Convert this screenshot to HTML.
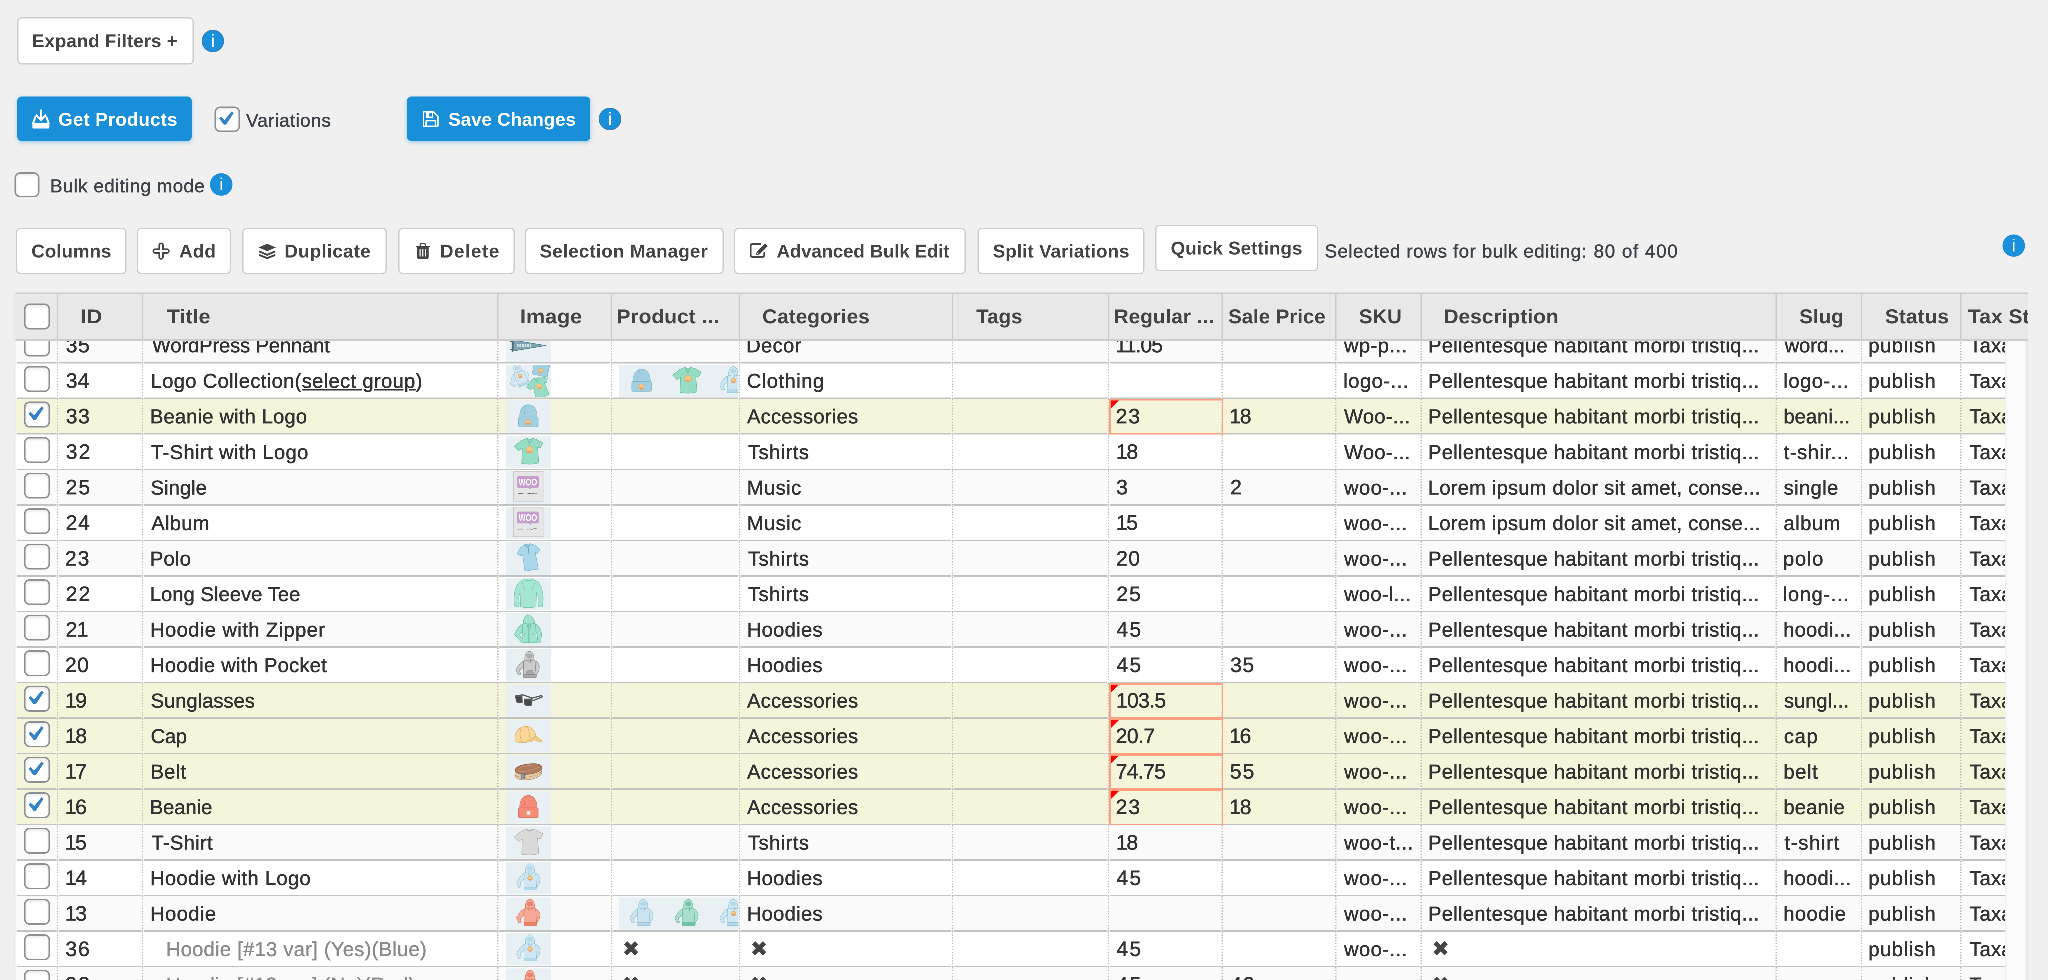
<!DOCTYPE html>
<html lang="en">
<head>
<meta charset="utf-8">
<title>Bulk Table Editor</title>
<style>
html,body{margin:0;padding:0;background:#f0f0f0;}
body{width:2048px;height:980px;overflow:hidden;position:relative;}
#app{will-change:transform;position:absolute;left:0;top:0;width:8192px;height:3920px;transform:scale(0.25);transform-origin:0 0;overflow:hidden;background:#f0f0f0;font-family:"Liberation Sans",sans-serif;font-size:74px;color:#3c434a;}
#app *{box-sizing:border-box;}
.btn{position:absolute;background:#fff;border:5.68px solid #ccc;border-radius:18px;color:#444;font-weight:700;font-size:74px;}
.pbtn{position:absolute;background:#198fda;border-radius:18px;color:#fff;font-weight:700;font-size:74px;box-shadow:0 5.6px 16.8px rgba(25,143,218,.38);}
.tx{position:absolute;white-space:pre;}
.btn svg,.pbtn svg{position:absolute;}
.info{position:absolute;width:89.6px;height:89.6px;border-radius:50%;background:#1a8fdc;color:#fff;text-align:center;font-size:70px;line-height:89.6px;font-weight:400;}
.info.b{box-shadow:inset 0 0 0 3.6px #3b7db5;}
.cb{position:absolute;background:#fff;border:6px solid #8c8f94;border-radius:22.4px;box-shadow:inset 0 5.6px 11.2px rgba(0,0,0,.1);}
.cb svg{position:absolute;left:0;top:0;width:100%;height:100%;}
.lbl{position:absolute;white-space:pre;font-size:74px;color:#3c434a;-webkit-text-stroke:1.4px #3c434a;}
#tbl{position:absolute;left:0;top:0;width:8192px;height:3920px;}
.row{position:absolute;background:#fff;font-size:79.6px;color:#333;overflow:hidden;-webkit-text-stroke:1.6px #333;}
.row.o{background:#fafafa;}
.row.s{background:#f5f5dc;}
.row .t{position:absolute;white-space:pre;}
.row .ln{position:absolute;left:6.8px;right:0;bottom:0;height:6px;background:#c2c2c2;}
.row .v{position:absolute;top:0;bottom:0;width:9px;background-color:inherit;background-image:repeating-linear-gradient(to bottom,#b9b9b9 0,#b9b9b9 5px,transparent 5px,transparent 11.36px);background-size:5px 100%;background-position:center top;background-repeat:no-repeat;}
.row .g{color:#8a8a8a;-webkit-text-stroke:1.4px #8a8a8a;}
.row .x{font-family:"DejaVu Sans",sans-serif;color:#444;-webkit-text-stroke:0;}
.row svg.th{position:absolute;}
.row .gal{position:absolute;top:0;bottom:0;overflow:hidden;}
.hl{position:absolute;border:6px solid #ff9f80;}
.hl i{position:absolute;left:0;top:0;width:0;height:0;border-top:32px solid #f00;border-right:32px solid transparent;}
#hdr{position:absolute;background:#e8e8e8;border-top:5.68px solid #ccc;border-bottom:6px solid #cdcdcd;font-size:79.6px;font-weight:700;color:#444;overflow:hidden;}
#hdr .h{position:absolute;top:0;bottom:0;width:5.2px;background:#ccc;}
#hdr .t{position:absolute;white-space:pre;transform-origin:0 50%;}
#track{position:absolute;background:#fbfbfb;border-left:5.6px solid #f1f1f1;border-right:9.6px solid #e9e9e9;}
</style>
</head>
<body>
<div id="app">
<div class="btn" style="left:69px;top:69px;width:706px;height:188.6px"><span class="tx" style="left:53.98px;top:42.08px;line-height:96px;letter-spacing:0.58px;">Expand Filters +</span></div>
<div class="info b" style="left:806.8px;top:119.2px">i</div>
<div class="pbtn" style="left:68.8px;top:386px;width:698.4px;height:177.6px"><svg style="left:59.2px;top:51.6px;width:71.2px;height:78px" viewBox="0 0 18 20"><path d="M9 .8v10M4.500 6l4.500 4.700L13.500 6" fill="none" stroke="#fff" stroke-width="2.100" stroke-linecap="round" stroke-linejoin="round"/><path d="M3.400 7.600L1 14M14.600 7.600L17 14" fill="none" stroke="#fff" stroke-width="2" stroke-linecap="round"/><path d="M.3 13.600h17.400v4.900a1 1 0 0 1-1 1H1.300a1 1 0 0 1-1-1z" fill="#fff"/></svg><span class="tx" style="left:164.24px;top:43.96px;line-height:96px;letter-spacing:1.07px;">Get Products</span></div>
<div class="cb" style="left:857.6px;top:425.6px;width:102px;height:102px"><svg viewBox="0 0 100 100"><polygon fill="#3582c4" points="14,47 21,38 38,53 70,15 79,22 45,74 35,74"/></svg></div>
<div class="lbl" style="left:984.29px;top:433.96px;line-height:96px;letter-spacing:1.72px;">Variations</div>
<div class="pbtn" style="left:1627.6px;top:386px;width:733.4px;height:177.6px"><svg style="left:63.6px;top:58px;width:63.6px;height:64px" viewBox="0 0 16 16"><path d="M1.400 .7h9.400l4.500 4.600v9.300a.7 .7 0 0 1-.7 .7H1.400a.7 .7 0 0 1-.7-.7V1.400a.7 .7 0 0 1 .7-.7z" fill="none" stroke="#fff" stroke-width="1.400" stroke-linejoin="round"/><path d="M3 1h7.600v5.200a.6 .6 0 0 1-.6 .6H3.600a.6 .6 0 0 1-.6-.6z" fill="#fff"/><rect x="6.600" y="2" width="2.800" height="3.600" rx=".5" fill="#198fda"/><path d="M3.300 15V10.300a.6 .6 0 0 1 .6-.6h8.200a.6 .6 0 0 1 .6 .6V15" fill="none" stroke="#fff" stroke-width="1.400"/></svg><span class="tx" style="left:165.86px;top:43.56px;line-height:96px;letter-spacing:0.37px;">Save Changes</span></div>
<div class="info b" style="left:2395.2px;top:431.2px">i</div>
<div class="cb" style="left:58.4px;top:688.8px;width:100px;height:100px"></div>
<div class="lbl" style="left:200.34px;top:695.56px;line-height:96px;letter-spacing:1.86px;">Bulk editing mode</div>
<div class="info" style="left:840.4px;top:693.2px">i</div>
<div class="btn" style="left:64px;top:910.8px;width:442.4px;height:185.2px"><span class="tx" style="left:56.53px;top:41.08px;line-height:96px;letter-spacing:0.52px;">Columns</span></div>
<div class="btn" style="left:546.8px;top:910.8px;width:376.8px;height:185.2px"><svg style="left:58.32px;top:54.32px;width:68.8px;height:68.8px" viewBox="0 0 17.200 17.200"><path d="M8.600 .9a1.800 1.800 0 0 1 1.800 1.800v4.100h4.100a1.800 1.800 0 0 1 0 3.600h-4.100v4.100a1.800 1.800 0 0 1-3.600 0v-4.100H2.700a1.800 1.800 0 0 1 0-3.600h4.100V2.700A1.800 1.800 0 0 1 8.600 .9z" fill="none" stroke="#444" stroke-width="1.700"/></svg><span class="tx" style="left:165.06px;top:41.08px;line-height:96px;letter-spacing:1.25px;">Add</span></div>
<div class="btn" style="left:968.8px;top:910.8px;width:578.4px;height:185.2px"><svg style="left:60.52px;top:59.12px;width:69.4px;height:60px" viewBox="0 0 17.400 15"><path d="M8.700 0L17.400 3.700 8.700 7.400 0 3.700z" fill="#444"/><path d="M.6 7.600L8.700 11.100 16.800 7.600M.6 11.200L8.700 14.400 16.800 11.200" fill="none" stroke="#444" stroke-width="1.900"/></svg><span class="tx" style="left:163.88px;top:41.08px;line-height:96px;letter-spacing:1.42px;">Duplicate</span></div>
<div class="btn" style="left:1592.8px;top:910.8px;width:466.4px;height:185.2px"><svg style="left:65.12px;top:55.92px;width:56.8px;height:64px" viewBox="0 0 14.200 16"><path d="M4.500 3V1.900a1.300 1.300 0 0 1 1.300-1.300h2.600a1.300 1.300 0 0 1 1.300 1.300V3" fill="none" stroke="#444" stroke-width="1.300"/><rect x="0" y="2.800" width="14.200" height="1.500" rx=".4" fill="#444"/><path d="M1.300 3.600h11.600v10.800a1.600 1.600 0 0 1-1.600 1.600H2.900a1.600 1.600 0 0 1-1.600-1.600z" fill="#444"/><path d="M4.300 6v7.500M7.100 6v7.500M9.900 6v7.500" stroke="#fff" stroke-width="1.100"/></svg><span class="tx" style="left:162.18px;top:41.08px;line-height:96px;letter-spacing:2.95px;">Delete</span></div>
<div class="btn" style="left:2100.4px;top:910.8px;width:794.6px;height:185.2px"><span class="tx" style="left:53.46px;top:41.08px;line-height:96px;letter-spacing:1.14px;">Selection Manager</span></div>
<div class="btn" style="left:2936px;top:910.8px;width:926.8px;height:185.2px"><svg style="left:57.52px;top:55.92px;width:73.6px;height:60px" viewBox="0 0 18.400 15"><path d="M10.500 .9H3a2.100 2.100 0 0 0-2.100 2.100v9a2.100 2.100 0 0 0 2.100 2.100h9.400a2.100 2.100 0 0 0 2.100-2.100V10" fill="none" stroke="#444" stroke-width="1.700" stroke-linecap="round"/><path d="M15.300 .4l2.700 2.700-8.300 8.300-3.600 .9 .9-3.600z" fill="#444"/><path d="M7.500 9.500l1.400 1.400-1.900 .5z" fill="#fff"/></svg><span class="tx" style="left:165.48px;top:41.08px;line-height:96px;letter-spacing:-0.2px;">Advanced Bulk Edit</span></div>
<div class="btn" style="left:3909.6px;top:910.8px;width:668.8px;height:185.2px"><span class="tx" style="left:56.73px;top:41.08px;line-height:96px;letter-spacing:0.77px;">Split Variations</span></div>
<div class="btn" style="left:4621.2px;top:899.2px;width:651.6px;height:185.8px"><span class="tx" style="left:56.81px;top:40.68px;line-height:96px;letter-spacing:0.63px;">Quick Settings</span></div>
<div class="lbl" style="left:5299.07px;top:956.76px;line-height:96px;letter-spacing:2.01px;">Selected rows for bulk editing:</div>
<div class="lbl" style="left:6374.67px;top:956.76px;line-height:96px;letter-spacing:3.4px;">80 of 400</div>
<div class="info" style="left:8010px;top:937.6px">i</div>
<div id="tbl">
<div class="row o" style="left:62.4px;top:1312.36px;width:7958.8px;height:142.04px"><i class="ln"></i><i class="v" style="left:163.12px"></i><i class="v" style="left:504.02px"></i><i class="v" style="left:1924.42px"></i><i class="v" style="left:2378.94px"></i><i class="v" style="left:2890.29px"></i><i class="v" style="left:3742.53px"></i><i class="v" style="left:4367.5px"></i><i class="v" style="left:4822.03px"></i><i class="v" style="left:5276.56px"></i><i class="v" style="left:5617.46px"></i><i class="v" style="left:7037.86px"></i><i class="v" style="left:7378.75px"></i><i class="v" style="left:7776.46px"></i><span class="cb" style="left:33.4px;top:10px;width:103.8px;height:103.8px"></span><span class="t" style="left:201.07px;top:12.95px;line-height:112px;letter-spacing:2.88px;font-size:82.8px;">35</span><span class="t" style="left:545.68px;top:14.06px;line-height:112px;letter-spacing:0.01px;">WordPress Pennant</span><svg class="th" style="left:1960.8px;top:4.8px;width:180.8px;height:130px" viewBox="0 0 45 32.500" preserveAspectRatio="none"><rect width="45" height="32.500" fill="#e8f0f4"/><path d="M6.500 9.500v13" stroke="#4d6f7c" stroke-width="1.200"/><path d="M7.600 10.800L40 16.300 7.600 21.700z" fill="#7fa5b2" stroke="#4d6f7c" stroke-width=".5"/><path d="M4 12.500h3.500M4 20.200h3.500" stroke="#4d6f7c" stroke-width="1"/><path d="M11 16.300h14" stroke="#d6e8ee" stroke-width="2.600" stroke-dasharray="1.700 .9"/></svg><span class="t" style="left:2922.45px;top:14.06px;line-height:112px;letter-spacing:2.05px;">Decor</span><span class="t" style="left:4399.19px;top:12.95px;line-height:112px;letter-spacing:-2.8px;font-size:82.8px;">11.05</span><span class="t" style="left:5313.85px;top:14.06px;line-height:112px;letter-spacing:2.27px;">wp-p...</span><span class="t" style="left:5650.15px;top:14.06px;line-height:112px;letter-spacing:1.59px;">Pellentesque habitant morbi tristiq...</span><span class="t" style="left:7076.55px;top:14.06px;line-height:112px;letter-spacing:0.2px;">word...</span><span class="t" style="left:7411px;top:14.06px;line-height:112px;letter-spacing:2.82px;">publish</span><span class="t" style="left:7815.35px;top:14.06px;line-height:112px;letter-spacing:1.2px;">Taxable</span></div>
<div class="row" style="left:62.4px;top:1454.4px;width:7958.8px;height:142.04px"><i class="ln"></i><i class="v" style="left:163.12px"></i><i class="v" style="left:504.02px"></i><i class="v" style="left:1924.42px"></i><i class="v" style="left:2378.94px"></i><i class="v" style="left:2890.29px"></i><i class="v" style="left:3742.53px"></i><i class="v" style="left:4367.5px"></i><i class="v" style="left:4822.03px"></i><i class="v" style="left:5276.56px"></i><i class="v" style="left:5617.46px"></i><i class="v" style="left:7037.86px"></i><i class="v" style="left:7378.75px"></i><i class="v" style="left:7776.46px"></i><span class="cb" style="left:33.4px;top:10px;width:103.8px;height:103.8px"></span><span class="t" style="left:201.17px;top:12.95px;line-height:112px;letter-spacing:1.28px;font-size:82.8px;">34</span><span class="t" style="left:540.52px;top:14.06px;line-height:112px;letter-spacing:1.82px;">Logo Collection(<u>select group</u>)</span><svg class="th" style="left:1960.8px;top:4.8px;width:180.8px;height:130px" viewBox="0 0 45 32.500" preserveAspectRatio="none"><rect width="45" height="32.500" fill="#e8f0f4"/><g transform="translate(-9.900,-4) rotate(-20 22.400 14.900) translate(22.400,14.900) scale(.86) translate(-22.400,-14.900)"><path d="M18.600 11.200c-2.400 .9-4.200 3-5.600 5.600l-2.300 3.400 2.300 5.400 2.500-.9-1.100-3.600 3.400-3.400z" fill="#d3e8f2" stroke="#9cc3d4" stroke-width=".45"/><path d="M29.600 11.200c2.600 1.100 4 3.200 4.500 5.800l-.6 4.200-2.300 4-2.400-.9 1.400-3.800-1.200-3.600z" fill="#d3e8f2" stroke="#9cc3d4" stroke-width=".45"/><path d="M18.400 11.300c1.600-1.100 3.600-1.500 5.800-1.500s4.200 .4 5.600 1.500l.9 14h-12.600z" fill="#d3e8f2" stroke="#9cc3d4" stroke-width=".45"/><rect x="18.100" y="25.100" width="13" height="2.900" rx=".7" fill="#b6d9e8" stroke="#9cc3d4" stroke-width=".4"/><path d="M19.600 10.400c-.5-4.600 1.400-8.400 4.500-8.700 3.200 .3 5 4.100 4.400 8.700-2.700 1.200-6.200 1.200-8.900 0z" fill="#d3e8f2" stroke="#9cc3d4" stroke-width=".45"/><ellipse cx="24.100" cy="6.400" rx="2.900" ry="2.300" fill="#b6d9e8"/><path d="M22.900 9.200v4.600M25.300 9.200v4.200" stroke="#9cc3d4" stroke-width=".45" fill="none"/><circle cx="24.2" cy="16" r="2.5" fill="#f3c885" stroke="#d9a566" stroke-width=".35"/><path d="M22.20 16.75a2.12 2.12 0 0 0 4.00 0z" fill="#e89b6d"/></g><g transform="rotate(12 35 6)"><rect x="27" y="-1" width="15.500" height="12" fill="#a3cfe3" stroke="#86b7cd" stroke-width=".5"/><circle cx="34.5" cy="6.2" r="2.4" fill="#f3c885" stroke="#d9a566" stroke-width=".35"/><path d="M32.58 6.92a2.04 2.04 0 0 0 3.84 0z" fill="#e89b6d"/></g><g transform="translate(10,7.600) rotate(-18 22.600 15.700) translate(22.600,15.700) scale(.8) translate(-22.600,-15.700)"><path d="M15.900 4.600l5.200-2.200c1.300 1.500 3.700 1.600 5.400 .1l4.800 1.500 5.700 3.300-2.700 5.200-2.700-1.300 1.300 15.900c-5 1.600-11.500 1.700-17 .6l.6-15.400-3.600 2.600-4.400-4.600z" fill="#97dcc4" stroke="#67b99c" stroke-width=".5" stroke-linejoin="round"/><path d="M21.100 2.400l2.600 5.800 2.800-5.700" fill="none" stroke="#67b99c" stroke-width=".7"/><circle cx="23.9" cy="14" r="3.5" fill="#f3c885" stroke="#d9a566" stroke-width=".35"/><path d="M21.10 15.05a2.98 2.98 0 0 0 5.60 0z" fill="#e89b6d"/></g></svg><span class="gal" style="left:2413.6px;width:478px"><svg class="th" style="left:0px;top:4.8px;width:180.8px;height:130px" viewBox="0 0 45 32.500" preserveAspectRatio="none"><rect width="45" height="32.500" fill="#e8f0f4"/><path d="M13.800 17.200c-.2-8 3.400-12.800 8.700-12.800s8.900 4.800 8.700 12.800z" fill="#a3cfe3" stroke="#7fb2c9" stroke-width=".45"/><path d="M19.800 5.300c-.9 3-1.100 6-1 9" stroke="#7fb2c9" stroke-width=".45" fill="none"/><rect x="12.700" y="16.800" width="19.600" height="9.800" rx="1.300" fill="#a3cfe3" stroke="#7fb2c9" stroke-width=".5"/><circle cx="22.2" cy="22" r="2.8" fill="#f3c885" stroke="#d9a566" stroke-width=".35"/><path d="M19.96 22.84a2.38 2.38 0 0 0 4.48 0z" fill="#e89b6d"/></svg><svg class="th" style="left:180px;top:4.8px;width:180.8px;height:130px" viewBox="0 0 45 32.500" preserveAspectRatio="none"><rect width="45" height="32.500" fill="#e8f0f4"/><path d="M15.900 4.600l5.200-2.200c1.300 1.500 3.700 1.600 5.400 .1l4.800 1.500 5.700 3.300-2.700 5.200-2.700-1.300 1.300 15.900c-5 1.600-11.500 1.700-17 .6l.6-15.400-3.600 2.600-4.400-4.600z" fill="#97dcc4" stroke="#67b99c" stroke-width=".5" stroke-linejoin="round"/><path d="M21.100 2.400l2.600 5.800 2.800-5.700" fill="none" stroke="#67b99c" stroke-width=".7"/><circle cx="23.9" cy="14" r="3.5" fill="#f3c885" stroke="#d9a566" stroke-width=".35"/><path d="M21.10 15.05a2.98 2.98 0 0 0 5.60 0z" fill="#e89b6d"/></svg><svg class="th" style="left:360px;top:4.8px;width:180.8px;height:130px" viewBox="0 0 45 32.500" preserveAspectRatio="none"><rect width="45" height="32.500" fill="#e8f0f4"/><path d="M18.600 11.200c-2.400 .9-4.200 3-5.600 5.600l-2.300 3.400 2.300 5.400 2.500-.9-1.100-3.600 3.400-3.400z" fill="#cfe7f2" stroke="#8cbdd0" stroke-width=".45"/><path d="M29.600 11.200c2.600 1.100 4 3.200 4.500 5.800l-.6 4.200-2.300 4-2.400-.9 1.400-3.800-1.200-3.600z" fill="#cfe7f2" stroke="#8cbdd0" stroke-width=".45"/><path d="M18.400 11.300c1.600-1.100 3.600-1.500 5.800-1.500s4.200 .4 5.600 1.500l.9 14h-12.600z" fill="#cfe7f2" stroke="#8cbdd0" stroke-width=".45"/><rect x="18.100" y="25.100" width="13" height="2.900" rx=".7" fill="#b0d9e9" stroke="#8cbdd0" stroke-width=".4"/><path d="M19.600 10.400c-.5-4.600 1.400-8.400 4.500-8.700 3.200 .3 5 4.100 4.400 8.700-2.700 1.200-6.200 1.200-8.900 0z" fill="#cfe7f2" stroke="#8cbdd0" stroke-width=".45"/><ellipse cx="24.100" cy="6.400" rx="2.900" ry="2.300" fill="#b0d9e9"/><path d="M22.900 9.200v4.600M25.300 9.200v4.200" stroke="#8cbdd0" stroke-width=".45" fill="none"/><circle cx="24.2" cy="16" r="2.5" fill="#f3c885" stroke="#d9a566" stroke-width=".35"/><path d="M22.20 16.75a2.12 2.12 0 0 0 4.00 0z" fill="#e89b6d"/></svg></span><span class="t" style="left:2924.97px;top:14.06px;line-height:112px;letter-spacing:2.39px;">Clothing</span><span class="t" style="left:5310.81px;top:14.06px;line-height:112px;letter-spacing:2.44px;">logo-...</span><span class="t" style="left:5650.15px;top:14.06px;line-height:112px;letter-spacing:1.59px;">Pellentesque habitant morbi tristiq...</span><span class="t" style="left:7071.21px;top:14.06px;line-height:112px;letter-spacing:2.44px;">logo-...</span><span class="t" style="left:7411px;top:14.06px;line-height:112px;letter-spacing:2.82px;">publish</span><span class="t" style="left:7815.35px;top:14.06px;line-height:112px;letter-spacing:1.2px;">Taxable</span></div>
<div class="row s" style="left:62.4px;top:1596.44px;width:7958.8px;height:142.04px"><i class="ln"></i><i class="v" style="left:163.12px"></i><i class="v" style="left:504.02px"></i><i class="v" style="left:1924.42px"></i><i class="v" style="left:2378.94px"></i><i class="v" style="left:2890.29px"></i><i class="v" style="left:3742.53px"></i><i class="v" style="left:4367.5px"></i><i class="v" style="left:4822.03px"></i><i class="v" style="left:5276.56px"></i><i class="v" style="left:5617.46px"></i><i class="v" style="left:7037.86px"></i><i class="v" style="left:7378.75px"></i><i class="v" style="left:7776.46px"></i><span class="cb" style="left:33.4px;top:10px;width:103.8px;height:103.8px"><svg viewBox="0 0 100 100"><polygon fill="#3582c4" points="14,47 21,38 38,53 70,15 79,22 45,74 35,74"/></svg></span><span class="t" style="left:201px;top:12.95px;line-height:112px;letter-spacing:3.27px;font-size:82.8px;">33</span><span class="t" style="left:537.66px;top:14.06px;line-height:112px;letter-spacing:1.14px;">Beanie with Logo</span><svg class="th" style="left:1960.8px;top:4.8px;width:180.8px;height:130px" viewBox="0 0 45 32.500" preserveAspectRatio="none"><rect width="45" height="32.500" fill="#e8f0f4"/><path d="M13.800 17.200c-.2-8 3.400-12.800 8.700-12.800s8.900 4.800 8.700 12.800z" fill="#a3cfe3" stroke="#7fb2c9" stroke-width=".45"/><path d="M19.800 5.300c-.9 3-1.100 6-1 9" stroke="#7fb2c9" stroke-width=".45" fill="none"/><rect x="12.700" y="16.800" width="19.600" height="9.800" rx="1.300" fill="#a3cfe3" stroke="#7fb2c9" stroke-width=".5"/><circle cx="22.2" cy="22" r="2.8" fill="#f3c885" stroke="#d9a566" stroke-width=".35"/><path d="M19.96 22.84a2.38 2.38 0 0 0 4.48 0z" fill="#e89b6d"/></svg><span class="t" style="left:2926.01px;top:14.06px;line-height:112px;letter-spacing:1.48px;">Accessories</span><span class="t" style="left:4400.73px;top:12.95px;line-height:112px;letter-spacing:4.64px;font-size:82.8px;">23</span><span class="t" style="left:4855.13px;top:12.95px;line-height:112px;letter-spacing:-4.14px;font-size:82.8px;">18</span><span class="t" style="left:5314.1px;top:14.06px;line-height:112px;letter-spacing:1.52px;">Woo-...</span><span class="t" style="left:5650.15px;top:14.06px;line-height:112px;letter-spacing:1.59px;">Pellentesque habitant morbi tristiq...</span><span class="t" style="left:7071.5px;top:14.06px;line-height:112px;letter-spacing:0.7px;">beani...</span><span class="t" style="left:7411px;top:14.06px;line-height:112px;letter-spacing:2.82px;">publish</span><span class="t" style="left:7815.35px;top:14.06px;line-height:112px;letter-spacing:1.2px;">Taxable</span></div>
<div class="row" style="left:62.4px;top:1738.48px;width:7958.8px;height:142.04px"><i class="ln"></i><i class="v" style="left:163.12px"></i><i class="v" style="left:504.02px"></i><i class="v" style="left:1924.42px"></i><i class="v" style="left:2378.94px"></i><i class="v" style="left:2890.29px"></i><i class="v" style="left:3742.53px"></i><i class="v" style="left:4367.5px"></i><i class="v" style="left:4822.03px"></i><i class="v" style="left:5276.56px"></i><i class="v" style="left:5617.46px"></i><i class="v" style="left:7037.86px"></i><i class="v" style="left:7378.75px"></i><i class="v" style="left:7776.46px"></i><span class="cb" style="left:33.4px;top:10px;width:103.8px;height:103.8px"></span><span class="t" style="left:201.17px;top:12.95px;line-height:112px;letter-spacing:5.3px;font-size:82.8px;">32</span><span class="t" style="left:541.96px;top:14.06px;line-height:112px;letter-spacing:1.97px;">T-Shirt with Logo</span><svg class="th" style="left:1960.8px;top:4.8px;width:180.8px;height:130px" viewBox="0 0 45 32.500" preserveAspectRatio="none"><rect width="45" height="32.500" fill="#e8f0f4"/><path d="M15.900 4.600l5.200-2.200c1.300 1.500 3.700 1.600 5.400 .1l4.800 1.500 5.700 3.300-2.700 5.200-2.700-1.300 1.300 15.900c-5 1.600-11.500 1.700-17 .6l.6-15.400-3.600 2.600-4.400-4.600z" fill="#97dcc4" stroke="#67b99c" stroke-width=".5" stroke-linejoin="round"/><path d="M21.100 2.400l2.600 5.800 2.800-5.700" fill="none" stroke="#67b99c" stroke-width=".7"/><circle cx="23.9" cy="14" r="3.5" fill="#f3c885" stroke="#d9a566" stroke-width=".35"/><path d="M21.10 15.05a2.98 2.98 0 0 0 5.60 0z" fill="#e89b6d"/></svg><span class="t" style="left:2930px;top:14.06px;line-height:112px;letter-spacing:2.2px;">Tshirts</span><span class="t" style="left:4401.93px;top:12.95px;line-height:112px;letter-spacing:-4.14px;font-size:82.8px;">18</span><span class="t" style="left:5314.1px;top:14.06px;line-height:112px;letter-spacing:1.52px;">Woo-...</span><span class="t" style="left:5650.15px;top:14.06px;line-height:112px;letter-spacing:1.59px;">Pellentesque habitant morbi tristiq...</span><span class="t" style="left:7072.62px;top:14.06px;line-height:112px;letter-spacing:2.59px;">t-shir...</span><span class="t" style="left:7411px;top:14.06px;line-height:112px;letter-spacing:2.82px;">publish</span><span class="t" style="left:7815.35px;top:14.06px;line-height:112px;letter-spacing:1.2px;">Taxable</span></div>
<div class="row o" style="left:62.4px;top:1880.52px;width:7958.8px;height:142.04px"><i class="ln"></i><i class="v" style="left:163.12px"></i><i class="v" style="left:504.02px"></i><i class="v" style="left:1924.42px"></i><i class="v" style="left:2378.94px"></i><i class="v" style="left:2890.29px"></i><i class="v" style="left:3742.53px"></i><i class="v" style="left:4367.5px"></i><i class="v" style="left:4822.03px"></i><i class="v" style="left:5276.56px"></i><i class="v" style="left:5617.46px"></i><i class="v" style="left:7037.86px"></i><i class="v" style="left:7378.75px"></i><i class="v" style="left:7776.46px"></i><span class="cb" style="left:33.4px;top:10px;width:103.8px;height:103.8px"></span><span class="t" style="left:200.46px;top:12.95px;line-height:112px;letter-spacing:5.18px;font-size:82.8px;">25</span><span class="t" style="left:540.4px;top:14.06px;line-height:112px;letter-spacing:0.63px;">Single</span><svg class="th" style="left:1960.8px;top:4.8px;width:180.8px;height:130px" viewBox="0 0 45 32.500" preserveAspectRatio="none"><rect width="45" height="32.500" fill="#e8f0f4"/><rect x="7.600" y=".4" width="29.600" height="29.600" fill="#e6e6e6" stroke="#c4c4c4" stroke-width=".6"/><path d="M13 4.800h18a2 2 0 0 1 2 2v7.800a2 2 0 0 1-2 2h-5.300l-1.400 1.700-1.500-1.700H13a2 2 0 0 1-2-2V6.800a2 2 0 0 1 2-2z" fill="#c69fd0"/><text x="22" y="14.300" font-family="Liberation Sans, sans-serif" font-weight="700" font-size="9.800" fill="#fff" text-anchor="middle" textLength="18.500" lengthAdjust="spacingAndGlyphs">WOO</text><path d="M12.300 22.600l2-.5 1.200 .4 2-.3M21.600 22.500l2.500-.4 1.400 .5 3-.7 2.500 .2" stroke="#666" stroke-width=".6" fill="none"/></svg><span class="t" style="left:2925.32px;top:14.06px;line-height:112px;letter-spacing:2.24px;">Music</span><span class="t" style="left:4402.59px;top:12.95px;line-height:112px;font-size:82.8px;">3</span><span class="t" style="left:4858.62px;top:12.95px;line-height:112px;font-size:82.8px;">2</span><span class="t" style="left:5314.15px;top:14.06px;line-height:112px;letter-spacing:2.22px;">woo-...</span><span class="t" style="left:5649.67px;top:14.06px;line-height:112px;letter-spacing:1.32px;">Lorem ipsum dolor sit amet, conse...</span><span class="t" style="left:7072.46px;top:14.06px;line-height:112px;letter-spacing:2.01px;">single</span><span class="t" style="left:7411px;top:14.06px;line-height:112px;letter-spacing:2.82px;">publish</span><span class="t" style="left:7815.35px;top:14.06px;line-height:112px;letter-spacing:1.2px;">Taxable</span></div>
<div class="row" style="left:62.4px;top:2022.56px;width:7958.8px;height:142.04px"><i class="ln"></i><i class="v" style="left:163.12px"></i><i class="v" style="left:504.02px"></i><i class="v" style="left:1924.42px"></i><i class="v" style="left:2378.94px"></i><i class="v" style="left:2890.29px"></i><i class="v" style="left:3742.53px"></i><i class="v" style="left:4367.5px"></i><i class="v" style="left:4822.03px"></i><i class="v" style="left:5276.56px"></i><i class="v" style="left:5617.46px"></i><i class="v" style="left:7037.86px"></i><i class="v" style="left:7378.75px"></i><i class="v" style="left:7776.46px"></i><span class="cb" style="left:33.4px;top:10px;width:103.8px;height:103.8px"></span><span class="t" style="left:200.5px;top:12.95px;line-height:112px;letter-spacing:4.11px;font-size:82.8px;">24</span><span class="t" style="left:543.23px;top:14.06px;line-height:112px;letter-spacing:1.59px;">Album</span><svg class="th" style="left:1960.8px;top:4.8px;width:180.8px;height:130px" viewBox="0 0 45 32.500" preserveAspectRatio="none"><rect width="45" height="32.500" fill="#e8f0f4"/><rect x="7.600" y=".4" width="29.600" height="29.600" fill="#e6e6e6" stroke="#c4c4c4" stroke-width=".6"/><path d="M13 4.800h18a2 2 0 0 1 2 2v7.800a2 2 0 0 1-2 2h-5.300l-1.400 1.700-1.500-1.700H13a2 2 0 0 1-2-2V6.800a2 2 0 0 1 2-2z" fill="#c69fd0"/><text x="22" y="14.300" font-family="Liberation Sans, sans-serif" font-weight="700" font-size="9.800" fill="#fff" text-anchor="middle" textLength="18.500" lengthAdjust="spacingAndGlyphs">WOO</text><path d="M12.300 22.600l2-.5 1.200 .4 2-.3M21.600 22.500l2.500-.4 1.400 .5 3-.7 2.500 .2" stroke="#666" stroke-width=".6" fill="none"/></svg><span class="t" style="left:2925.32px;top:14.06px;line-height:112px;letter-spacing:2.24px;">Music</span><span class="t" style="left:4401.56px;top:12.95px;line-height:112px;letter-spacing:-4.8px;font-size:82.8px;">15</span><span class="t" style="left:5314.15px;top:14.06px;line-height:112px;letter-spacing:2.22px;">woo-...</span><span class="t" style="left:5649.67px;top:14.06px;line-height:112px;letter-spacing:1.32px;">Lorem ipsum dolor sit amet, conse...</span><span class="t" style="left:7071.75px;top:14.06px;line-height:112px;letter-spacing:2.5px;">album</span><span class="t" style="left:7411px;top:14.06px;line-height:112px;letter-spacing:2.82px;">publish</span><span class="t" style="left:7815.35px;top:14.06px;line-height:112px;letter-spacing:1.2px;">Taxable</span></div>
<div class="row o" style="left:62.4px;top:2164.6px;width:7958.8px;height:142.04px"><i class="ln"></i><i class="v" style="left:163.12px"></i><i class="v" style="left:504.02px"></i><i class="v" style="left:1924.42px"></i><i class="v" style="left:2378.94px"></i><i class="v" style="left:2890.29px"></i><i class="v" style="left:3742.53px"></i><i class="v" style="left:4367.5px"></i><i class="v" style="left:4822.03px"></i><i class="v" style="left:5276.56px"></i><i class="v" style="left:5617.46px"></i><i class="v" style="left:7037.86px"></i><i class="v" style="left:7378.75px"></i><i class="v" style="left:7776.46px"></i><span class="cb" style="left:33.4px;top:10px;width:103.8px;height:103.8px"></span><span class="t" style="left:197.93px;top:12.95px;line-height:112px;letter-spacing:4.64px;font-size:82.8px;">23</span><span class="t" style="left:537.35px;top:14.06px;line-height:112px;letter-spacing:1.37px;">Polo</span><svg class="th" style="left:1960.8px;top:4.8px;width:180.8px;height:130px" viewBox="0 0 45 32.500" preserveAspectRatio="none"><rect width="45" height="32.500" fill="#e8f0f4"/><g transform="rotate(-9 22 15)"><path d="M16.200 4.400l4.600-2.400h5.800l4.500 2.400 4.200 5.400-3.600 3.100-1.700-1.900 .5 17.300h-13.600l.4-17.300-1.600 1.900-3.700-3.100z" fill="#aad7e9" stroke="#7fb4c9" stroke-width=".5" stroke-linejoin="round"/><path d="M20.800 2l2.900 3.300 2.900-3.300M23.700 5.300v6.500" stroke="#6da3b9" stroke-width=".9" fill="none"/></g></svg><span class="t" style="left:2930px;top:14.06px;line-height:112px;letter-spacing:2.2px;">Tshirts</span><span class="t" style="left:4402.6px;top:12.95px;line-height:112px;letter-spacing:2.44px;font-size:82.8px;">20</span><span class="t" style="left:5314.15px;top:14.06px;line-height:112px;letter-spacing:2.22px;">woo-...</span><span class="t" style="left:5650.15px;top:14.06px;line-height:112px;letter-spacing:1.59px;">Pellentesque habitant morbi tristiq...</span><span class="t" style="left:7069.98px;top:14.06px;line-height:112px;letter-spacing:3.4px;">polo</span><span class="t" style="left:7411px;top:14.06px;line-height:112px;letter-spacing:2.82px;">publish</span><span class="t" style="left:7815.35px;top:14.06px;line-height:112px;letter-spacing:1.2px;">Taxable</span></div>
<div class="row" style="left:62.4px;top:2306.64px;width:7958.8px;height:142.04px"><i class="ln"></i><i class="v" style="left:163.12px"></i><i class="v" style="left:504.02px"></i><i class="v" style="left:1924.42px"></i><i class="v" style="left:2378.94px"></i><i class="v" style="left:2890.29px"></i><i class="v" style="left:3742.53px"></i><i class="v" style="left:4367.5px"></i><i class="v" style="left:4822.03px"></i><i class="v" style="left:5276.56px"></i><i class="v" style="left:5617.46px"></i><i class="v" style="left:7037.86px"></i><i class="v" style="left:7378.75px"></i><i class="v" style="left:7776.46px"></i><span class="cb" style="left:33.4px;top:10px;width:103.8px;height:103.8px"></span><span class="t" style="left:200.5px;top:12.95px;line-height:112px;letter-spacing:5.51px;font-size:82.8px;">22</span><span class="t" style="left:537.26px;top:14.06px;line-height:112px;letter-spacing:0.7px;">Long Sleeve Tee</span><svg class="th" style="left:1960.8px;top:4.8px;width:180.8px;height:130px" viewBox="0 0 45 32.500" preserveAspectRatio="none"><rect width="45" height="32.500" fill="#e8f0f4"/><path d="M14.500 3.500c2.400-1.600 5.300-2.400 8.300-2.400s5.900 .8 8.300 2.400c3.800 2.700 6 9.300 6.200 17.500l-.8 7.800-3.600 .6-.9-3.400 .3-7-1.700-4.200-.5 14.300c-4.700 1-10.600 1-15.300 0l-.5-14.300-1.400 4.200 .6 7-1 3.400-3.400-.6c-.7-2.600-1-5.200-.9-7.800 .2-8.200 2.500-14.800 6.300-17.500z" fill="#a5e6d2" stroke="#74c2a9" stroke-width=".5" stroke-linejoin="round"/><path d="M19 1.800c2.300 1.500 5.300 1.500 7.600 0M16.200 4.200l3.300 9M29.300 4.200l-3.300 9" stroke="#74c2a9" stroke-width=".5" fill="none"/></svg><span class="t" style="left:2930px;top:14.06px;line-height:112px;letter-spacing:2.2px;">Tshirts</span><span class="t" style="left:4403.26px;top:12.95px;line-height:112px;letter-spacing:5.18px;font-size:82.8px;">25</span><span class="t" style="left:5314.46px;top:14.06px;line-height:112px;letter-spacing:1.54px;">woo-l...</span><span class="t" style="left:5650.15px;top:14.06px;line-height:112px;letter-spacing:1.59px;">Pellentesque habitant morbi tristiq...</span><span class="t" style="left:7069.17px;top:14.06px;line-height:112px;letter-spacing:2.88px;">long-...</span><span class="t" style="left:7411px;top:14.06px;line-height:112px;letter-spacing:2.82px;">publish</span><span class="t" style="left:7815.35px;top:14.06px;line-height:112px;letter-spacing:1.2px;">Taxable</span></div>
<div class="row o" style="left:62.4px;top:2448.68px;width:7958.8px;height:142.04px"><i class="ln"></i><i class="v" style="left:163.12px"></i><i class="v" style="left:504.02px"></i><i class="v" style="left:1924.42px"></i><i class="v" style="left:2378.94px"></i><i class="v" style="left:2890.29px"></i><i class="v" style="left:3742.53px"></i><i class="v" style="left:4367.5px"></i><i class="v" style="left:4822.03px"></i><i class="v" style="left:5276.56px"></i><i class="v" style="left:5617.46px"></i><i class="v" style="left:7037.86px"></i><i class="v" style="left:7378.75px"></i><i class="v" style="left:7776.46px"></i><span class="cb" style="left:33.4px;top:10px;width:103.8px;height:103.8px"></span><span class="t" style="left:200.48px;top:12.95px;line-height:112px;letter-spacing:-1.51px;font-size:82.8px;">21</span><span class="t" style="left:538.43px;top:14.06px;line-height:112px;letter-spacing:2.09px;">Hoodie with Zipper</span><svg class="th" style="left:1960.8px;top:4.8px;width:180.8px;height:130px" viewBox="0 0 45 32.500" preserveAspectRatio="none"><rect width="45" height="32.500" fill="#e8f0f4"/><path d="M17.200 10.600c-3.300 1.400-5.900 4.800-8.500 10.400l6.300 7.300 2-1.400-3.300-5.500 3.600-3.400z" fill="#9fe3cf" stroke="#62b59c" stroke-width=".45"/><path d="M29.600 10.600c3.300 1.500 5.300 5 6.100 10.500l-1 7.800-2.800 .3-.6-7.400-1.500-3.800z" fill="#9fe3cf" stroke="#62b59c" stroke-width=".45"/><path d="M17 10.700c1.800-1 4-1.500 6.200-1.500s4.600 .5 6.500 1.500l.8 18.800h-14.500z" fill="#9fe3cf" stroke="#62b59c" stroke-width=".45"/><path d="M17.600 9.800c-.4-3.500 1.300-7 4.200-8.400 3.800 1.100 6.800 4.300 7.100 8.300-3.400 1.400-7.900 1.500-11.300 .1z" fill="#9fe3cf" stroke="#62b59c" stroke-width=".45"/><path d="M23.100 9.800v19.700" stroke="#4f9f88" stroke-width=".8"/><path d="M22 10.300l-.8 5.200M24.300 10.300l.8 5.200" stroke="#62b59c" stroke-width=".45"/><path d="M18.500 21.500l2.300-1.800h4.800l2.400 1.800" stroke="#62b59c" stroke-width=".45" fill="none"/></svg><span class="t" style="left:2925.31px;top:14.06px;line-height:112px;letter-spacing:1.7px;">Hoodies</span><span class="t" style="left:4403.53px;top:12.95px;line-height:112px;letter-spacing:6px;font-size:82.8px;">45</span><span class="t" style="left:5314.15px;top:14.06px;line-height:112px;letter-spacing:2.22px;">woo-...</span><span class="t" style="left:5650.15px;top:14.06px;line-height:112px;letter-spacing:1.59px;">Pellentesque habitant morbi tristiq...</span><span class="t" style="left:7070.74px;top:14.06px;line-height:112px;letter-spacing:1.45px;">hoodi...</span><span class="t" style="left:7411px;top:14.06px;line-height:112px;letter-spacing:2.82px;">publish</span><span class="t" style="left:7815.35px;top:14.06px;line-height:112px;letter-spacing:1.2px;">Taxable</span></div>
<div class="row" style="left:62.4px;top:2590.72px;width:7958.8px;height:142.04px"><i class="ln"></i><i class="v" style="left:163.12px"></i><i class="v" style="left:504.02px"></i><i class="v" style="left:1924.42px"></i><i class="v" style="left:2378.94px"></i><i class="v" style="left:2890.29px"></i><i class="v" style="left:3742.53px"></i><i class="v" style="left:4367.5px"></i><i class="v" style="left:4822.03px"></i><i class="v" style="left:5276.56px"></i><i class="v" style="left:5617.46px"></i><i class="v" style="left:7037.86px"></i><i class="v" style="left:7378.75px"></i><i class="v" style="left:7776.46px"></i><span class="cb" style="left:33.4px;top:10px;width:103.8px;height:103.8px"></span><span class="t" style="left:198.2px;top:12.95px;line-height:112px;letter-spacing:2.44px;font-size:82.8px;">20</span><span class="t" style="left:538.39px;top:14.06px;line-height:112px;letter-spacing:1.46px;">Hoodie with Pocket</span><svg class="th" style="left:1960.8px;top:4.8px;width:180.8px;height:130px" viewBox="0 0 45 32.500" preserveAspectRatio="none"><rect width="45" height="32.500" fill="#e8f0f4"/><g transform="translate(-.6,.5)"><path d="M18.600 11.200c-2.400 .9-4.200 3-5.600 5.600l-2.300 3.400 2.300 5.400 2.500-.9-1.100-3.600 3.400-3.400z" fill="#cbcbcb" stroke="#858585" stroke-width=".45"/><path d="M29.600 11.200c2.600 1.100 4 3.200 4.500 5.800l-.6 4.200-2.300 4-2.400-.9 1.400-3.800-1.200-3.600z" fill="#cbcbcb" stroke="#858585" stroke-width=".45"/><path d="M18.400 11.300c1.600-1.100 3.600-1.500 5.800-1.500s4.200 .4 5.600 1.500l.9 14h-12.600z" fill="#cbcbcb" stroke="#858585" stroke-width=".45"/><rect x="18.100" y="25.100" width="13" height="2.900" rx=".7" fill="#a9a9a9" stroke="#858585" stroke-width=".4"/><path d="M19.600 10.400c-.5-4.600 1.400-8.400 4.500-8.700 3.200 .3 5 4.100 4.400 8.700-2.700 1.200-6.200 1.200-8.900 0z" fill="#cbcbcb" stroke="#858585" stroke-width=".45"/><ellipse cx="24.100" cy="6.400" rx="2.900" ry="2.300" fill="#a9a9a9"/><path d="M22.900 9.200v4.600M25.300 9.200v4.200" stroke="#858585" stroke-width=".45" fill="none"/><path d="M20.400 25.100l1.600-4.400h5.200l1.600 4.400z" fill="#a9a9a9" stroke="#858585" stroke-width=".4"/></g></svg><span class="t" style="left:2925.31px;top:14.06px;line-height:112px;letter-spacing:1.7px;">Hoodies</span><span class="t" style="left:4403.53px;top:12.95px;line-height:112px;letter-spacing:6px;font-size:82.8px;">45</span><span class="t" style="left:4858.67px;top:12.95px;line-height:112px;letter-spacing:2.88px;font-size:82.8px;">35</span><span class="t" style="left:5314.15px;top:14.06px;line-height:112px;letter-spacing:2.22px;">woo-...</span><span class="t" style="left:5650.15px;top:14.06px;line-height:112px;letter-spacing:1.59px;">Pellentesque habitant morbi tristiq...</span><span class="t" style="left:7070.74px;top:14.06px;line-height:112px;letter-spacing:1.45px;">hoodi...</span><span class="t" style="left:7411px;top:14.06px;line-height:112px;letter-spacing:2.82px;">publish</span><span class="t" style="left:7815.35px;top:14.06px;line-height:112px;letter-spacing:1.2px;">Taxable</span></div>
<div class="row s" style="left:62.4px;top:2732.76px;width:7958.8px;height:142.04px"><i class="ln"></i><i class="v" style="left:163.12px"></i><i class="v" style="left:504.02px"></i><i class="v" style="left:1924.42px"></i><i class="v" style="left:2378.94px"></i><i class="v" style="left:2890.29px"></i><i class="v" style="left:3742.53px"></i><i class="v" style="left:4367.5px"></i><i class="v" style="left:4822.03px"></i><i class="v" style="left:5276.56px"></i><i class="v" style="left:5617.46px"></i><i class="v" style="left:7037.86px"></i><i class="v" style="left:7378.75px"></i><i class="v" style="left:7776.46px"></i><span class="cb" style="left:33.4px;top:10px;width:103.8px;height:103.8px"><svg viewBox="0 0 100 100"><polygon fill="#3582c4" points="14,47 21,38 38,53 70,15 79,22 45,74 35,74"/></svg></span><span class="t" style="left:197.82px;top:12.95px;line-height:112px;letter-spacing:-4.8px;font-size:82.8px;">19</span><span class="t" style="left:540.65px;top:14.06px;line-height:112px;letter-spacing:0.49px;">Sunglasses</span><svg class="th" style="left:1960.8px;top:4.8px;width:180.8px;height:130px" viewBox="0 0 45 32.500" preserveAspectRatio="none"><rect width="45" height="32.500" fill="#e8f0f4"/><path d="M9.300 11.600l7.600-1.300 9.500 3.300 9.300-2.600 .7 1.400-9.600 3.800" fill="none" stroke="#565656" stroke-width="1.200" stroke-linejoin="round"/><path d="M9.200 11.500l7.300-.8 .4 7.300c-2 1.300-5.400 1.100-6.600-.7z" fill="#5a5a5a"/><path d="M17.900 14.200l8.800-.2-.4 6.700c-2.300 1.600-6.200 1.400-7.800-.6z" fill="#5a5a5a"/><path d="M10.400 12.700l5-.5 .2 4.800c-1.500.7-3.600.6-4.500-.5z" fill="#454948"/><path d="M19.200 15.400l6.200-.1-.3 4.500c-1.700 1-4.200.9-5.400-.4z" fill="#454948"/></svg><span class="t" style="left:2926.01px;top:14.06px;line-height:112px;letter-spacing:1.48px;">Accessories</span><span class="t" style="left:4401.99px;top:12.95px;line-height:112px;letter-spacing:-1.85px;font-size:82.8px;">103.5</span><span class="t" style="left:5314.15px;top:14.06px;line-height:112px;letter-spacing:2.22px;">woo-...</span><span class="t" style="left:5650.15px;top:14.06px;line-height:112px;letter-spacing:1.59px;">Pellentesque habitant morbi tristiq...</span><span class="t" style="left:7073.96px;top:14.06px;line-height:112px;letter-spacing:0.4px;">sungl...</span><span class="t" style="left:7411px;top:14.06px;line-height:112px;letter-spacing:2.82px;">publish</span><span class="t" style="left:7815.35px;top:14.06px;line-height:112px;letter-spacing:1.2px;">Taxable</span></div>
<div class="row s" style="left:62.4px;top:2874.8px;width:7958.8px;height:142.04px"><i class="ln"></i><i class="v" style="left:163.12px"></i><i class="v" style="left:504.02px"></i><i class="v" style="left:1924.42px"></i><i class="v" style="left:2378.94px"></i><i class="v" style="left:2890.29px"></i><i class="v" style="left:3742.53px"></i><i class="v" style="left:4367.5px"></i><i class="v" style="left:4822.03px"></i><i class="v" style="left:5276.56px"></i><i class="v" style="left:5617.46px"></i><i class="v" style="left:7037.86px"></i><i class="v" style="left:7378.75px"></i><i class="v" style="left:7776.46px"></i><span class="cb" style="left:33.4px;top:10px;width:103.8px;height:103.8px"><svg viewBox="0 0 100 100"><polygon fill="#3582c4" points="14,47 21,38 38,53 70,15 79,22 45,74 35,74"/></svg></span><span class="t" style="left:197.53px;top:12.95px;line-height:112px;letter-spacing:-4.14px;font-size:82.8px;">18</span><span class="t" style="left:540.59px;top:14.06px;line-height:112px;letter-spacing:-0.65px;">Cap</span><svg class="th" style="left:1960.8px;top:4.8px;width:180.8px;height:130px" viewBox="0 0 45 32.500" preserveAspectRatio="none"><rect width="45" height="32.500" fill="#e8f0f4"/><path d="M9.300 20.900c-1-7.600 3-13.600 9.700-14.400 6-.6 10.200 3.500 11 9.800l-9.300 5.900c-4.100 .9-8.600 .6-11.400-1.300z" fill="#fad796" stroke="#d3a867" stroke-width=".5"/><path d="M20.300 21.700l9.700-5.400 6.400 4.500c-.2 1-1 1.500-2 1.400l-6.200-2.600c-1.800 2-4.600 3-7.900 2.100z" fill="#f6ca80" stroke="#d3a867" stroke-width=".5"/><path d="M15.300 7.800c-1.400 4-1.300 9 .5 13.800M21 6.600c2.200 3.300 3 7.600 2.200 12.300M20 6.300l.9-.5" stroke="#d3a867" stroke-width=".5" fill="none"/></svg><span class="t" style="left:2926.01px;top:14.06px;line-height:112px;letter-spacing:1.48px;">Accessories</span><span class="t" style="left:4400.73px;top:12.95px;line-height:112px;letter-spacing:-1.31px;font-size:82.8px;">20.7</span><span class="t" style="left:4855.09px;top:12.95px;line-height:112px;letter-spacing:-4.8px;font-size:82.8px;">16</span><span class="t" style="left:5314.15px;top:14.06px;line-height:112px;letter-spacing:2.22px;">woo-...</span><span class="t" style="left:5650.15px;top:14.06px;line-height:112px;letter-spacing:1.59px;">Pellentesque habitant morbi tristiq...</span><span class="t" style="left:7073.25px;top:14.06px;line-height:112px;letter-spacing:3.25px;">cap</span><span class="t" style="left:7411px;top:14.06px;line-height:112px;letter-spacing:2.82px;">publish</span><span class="t" style="left:7815.35px;top:14.06px;line-height:112px;letter-spacing:1.2px;">Taxable</span></div>
<div class="row s" style="left:62.4px;top:3016.84px;width:7958.8px;height:142.04px"><i class="ln"></i><i class="v" style="left:163.12px"></i><i class="v" style="left:504.02px"></i><i class="v" style="left:1924.42px"></i><i class="v" style="left:2378.94px"></i><i class="v" style="left:2890.29px"></i><i class="v" style="left:3742.53px"></i><i class="v" style="left:4367.5px"></i><i class="v" style="left:4822.03px"></i><i class="v" style="left:5276.56px"></i><i class="v" style="left:5617.46px"></i><i class="v" style="left:7037.86px"></i><i class="v" style="left:7378.75px"></i><i class="v" style="left:7776.46px"></i><span class="cb" style="left:33.4px;top:10px;width:103.8px;height:103.8px"><svg viewBox="0 0 100 100"><polygon fill="#3582c4" points="14,47 21,38 38,53 70,15 79,22 45,74 35,74"/></svg></span><span class="t" style="left:197.8px;top:12.95px;line-height:112px;letter-spacing:-4.8px;font-size:82.8px;">17</span><span class="t" style="left:539.75px;top:14.06px;line-height:112px;letter-spacing:1.52px;">Belt</span><svg class="th" style="left:1960.8px;top:4.8px;width:180.8px;height:130px" viewBox="0 0 45 32.500" preserveAspectRatio="none"><rect width="45" height="32.500" fill="#e8f0f4"/><path d="M9.300 14.500c.3-3.400 7.500-6 16.500-6.400 6.400-.3 10.400 1.300 10.400 4.300l-.3 4.700c-.5 3.600-7.500 7-16.500 7.300-6.300 .2-10-1.700-10.300-4.500z" fill="#e3cba6" stroke="#a9795c" stroke-width=".5"/><path d="M9.500 14.600c.3-3.300 7.400-5.900 16.300-6.300 6.300-.3 10.200 1.200 10.200 4 0 3.200-7.300 6.300-16.200 6.700-6.200 .3-10.300-1.600-10.300-4.400z" fill="#b07b5e" stroke="#8e5d45" stroke-width=".5"/><path d="M12.500 13.600c3-2.500 9-4 15.500-4M13 16c5 .5 14-1 20.500-4.500" stroke="#c99a7d" stroke-width=".5" fill="none"/><path d="M9.500 19.800c3 2 9 2.500 15 1.300 5-1 9.500-3 11.400-5.500" stroke="#a9795c" stroke-width=".6" fill="none" stroke-dasharray="1.500 1"/><rect x="15.400" y="17.800" width="3.300" height="5.600" fill="#8d9aa0" stroke="#65727a" stroke-width=".5"/></svg><span class="t" style="left:2926.01px;top:14.06px;line-height:112px;letter-spacing:1.48px;">Accessories</span><span class="t" style="left:4400.73px;top:12.95px;line-height:112px;letter-spacing:-1.8px;font-size:82.8px;">74.75</span><span class="t" style="left:4857.41px;top:12.95px;line-height:112px;letter-spacing:5.18px;font-size:82.8px;">55</span><span class="t" style="left:5314.15px;top:14.06px;line-height:112px;letter-spacing:2.22px;">woo-...</span><span class="t" style="left:5650.15px;top:14.06px;line-height:112px;letter-spacing:1.59px;">Pellentesque habitant morbi tristiq...</span><span class="t" style="left:7071.47px;top:14.06px;line-height:112px;letter-spacing:2.9px;">belt</span><span class="t" style="left:7411px;top:14.06px;line-height:112px;letter-spacing:2.82px;">publish</span><span class="t" style="left:7815.35px;top:14.06px;line-height:112px;letter-spacing:1.2px;">Taxable</span></div>
<div class="row s" style="left:62.4px;top:3158.88px;width:7958.8px;height:142.04px"><i class="ln"></i><i class="v" style="left:163.12px"></i><i class="v" style="left:504.02px"></i><i class="v" style="left:1924.42px"></i><i class="v" style="left:2378.94px"></i><i class="v" style="left:2890.29px"></i><i class="v" style="left:3742.53px"></i><i class="v" style="left:4367.5px"></i><i class="v" style="left:4822.03px"></i><i class="v" style="left:5276.56px"></i><i class="v" style="left:5617.46px"></i><i class="v" style="left:7037.86px"></i><i class="v" style="left:7378.75px"></i><i class="v" style="left:7776.46px"></i><span class="cb" style="left:33.4px;top:10px;width:103.8px;height:103.8px"><svg viewBox="0 0 100 100"><polygon fill="#3582c4" points="14,47 21,38 38,53 70,15 79,22 45,74 35,74"/></svg></span><span class="t" style="left:197.49px;top:12.95px;line-height:112px;letter-spacing:-4.8px;font-size:82.8px;">16</span><span class="t" style="left:536.79px;top:14.06px;line-height:112px;letter-spacing:0.41px;">Beanie</span><svg class="th" style="left:1960.8px;top:4.8px;width:180.8px;height:130px" viewBox="0 0 45 32.500" preserveAspectRatio="none"><rect width="45" height="32.500" fill="#e8f0f4"/><path d="M13.800 17.200c-.2-8 3.400-12.800 8.700-12.800s8.900 4.800 8.700 12.800z" fill="#f58c78" stroke="#d96d5a" stroke-width=".45"/><path d="M19.800 5.300c-.9 3-1.100 6-1 9" stroke="#d96d5a" stroke-width=".45" fill="none"/><rect x="12.700" y="16.800" width="19.600" height="9.800" rx="1.300" fill="#f58c78" stroke="#d96d5a" stroke-width=".5"/><rect x="20.900" y="20.200" width="3.500" height="3.600" fill="#fdf3ef" stroke="#f7b6a6" stroke-width=".5"/></svg><span class="t" style="left:2926.01px;top:14.06px;line-height:112px;letter-spacing:1.48px;">Accessories</span><span class="t" style="left:4400.73px;top:12.95px;line-height:112px;letter-spacing:4.64px;font-size:82.8px;">23</span><span class="t" style="left:4855.13px;top:12.95px;line-height:112px;letter-spacing:-4.14px;font-size:82.8px;">18</span><span class="t" style="left:5314.15px;top:14.06px;line-height:112px;letter-spacing:2.22px;">woo-...</span><span class="t" style="left:5650.15px;top:14.06px;line-height:112px;letter-spacing:1.59px;">Pellentesque habitant morbi tristiq...</span><span class="t" style="left:7071.43px;top:14.06px;line-height:112px;letter-spacing:1.17px;">beanie</span><span class="t" style="left:7411px;top:14.06px;line-height:112px;letter-spacing:2.82px;">publish</span><span class="t" style="left:7815.35px;top:14.06px;line-height:112px;letter-spacing:1.2px;">Taxable</span></div>
<div class="row o" style="left:62.4px;top:3300.92px;width:7958.8px;height:142.04px"><i class="ln"></i><i class="v" style="left:163.12px"></i><i class="v" style="left:504.02px"></i><i class="v" style="left:1924.42px"></i><i class="v" style="left:2378.94px"></i><i class="v" style="left:2890.29px"></i><i class="v" style="left:3742.53px"></i><i class="v" style="left:4367.5px"></i><i class="v" style="left:4822.03px"></i><i class="v" style="left:5276.56px"></i><i class="v" style="left:5617.46px"></i><i class="v" style="left:7037.86px"></i><i class="v" style="left:7378.75px"></i><i class="v" style="left:7776.46px"></i><span class="cb" style="left:33.4px;top:10px;width:103.8px;height:103.8px"></span><span class="t" style="left:197.16px;top:12.95px;line-height:112px;letter-spacing:-4.8px;font-size:82.8px;">15</span><span class="t" style="left:543.52px;top:14.06px;line-height:112px;letter-spacing:1.67px;">T-Shirt</span><svg class="th" style="left:1960.8px;top:4.8px;width:180.8px;height:130px" viewBox="0 0 45 32.500" preserveAspectRatio="none"><rect width="45" height="32.500" fill="#e8f0f4"/><path d="M15.900 4.600l5.200-2.200c1.300 1.500 3.700 1.600 5.400 .1l4.800 1.500 5.700 3.300-2.700 5.200-2.700-1.300 1.300 15.900c-5 1.600-11.500 1.700-17 .6l.6-15.400-3.600 2.600-4.400-4.600z" fill="#dadada" stroke="#a9a9a9" stroke-width=".5" stroke-linejoin="round"/><path d="M21.100 2.400c1.300 2.600 4 2.700 5.400 .1" fill="none" stroke="#a9a9a9" stroke-width=".9"/></svg><span class="t" style="left:2930px;top:14.06px;line-height:112px;letter-spacing:2.2px;">Tshirts</span><span class="t" style="left:4401.93px;top:12.95px;line-height:112px;letter-spacing:-4.14px;font-size:82.8px;">18</span><span class="t" style="left:5314.15px;top:14.06px;line-height:112px;letter-spacing:2.15px;">woo-t...</span><span class="t" style="left:5650.15px;top:14.06px;line-height:112px;letter-spacing:1.59px;">Pellentesque habitant morbi tristiq...</span><span class="t" style="left:7075.43px;top:14.06px;line-height:112px;letter-spacing:3.4px;">t-shirt</span><span class="t" style="left:7411px;top:14.06px;line-height:112px;letter-spacing:2.82px;">publish</span><span class="t" style="left:7815.35px;top:14.06px;line-height:112px;letter-spacing:1.2px;">Taxable</span></div>
<div class="row" style="left:62.4px;top:3442.96px;width:7958.8px;height:142.04px"><i class="ln"></i><i class="v" style="left:163.12px"></i><i class="v" style="left:504.02px"></i><i class="v" style="left:1924.42px"></i><i class="v" style="left:2378.94px"></i><i class="v" style="left:2890.29px"></i><i class="v" style="left:3742.53px"></i><i class="v" style="left:4367.5px"></i><i class="v" style="left:4822.03px"></i><i class="v" style="left:5276.56px"></i><i class="v" style="left:5617.46px"></i><i class="v" style="left:7037.86px"></i><i class="v" style="left:7378.75px"></i><i class="v" style="left:7776.46px"></i><span class="cb" style="left:33.4px;top:10px;width:103.8px;height:103.8px"></span><span class="t" style="left:197.86px;top:12.95px;line-height:112px;letter-spacing:-4.8px;font-size:82.8px;">14</span><span class="t" style="left:538.39px;top:14.06px;line-height:112px;letter-spacing:1.76px;">Hoodie with Logo</span><svg class="th" style="left:1960.8px;top:4.8px;width:180.8px;height:130px" viewBox="0 0 45 32.500" preserveAspectRatio="none"><rect width="45" height="32.500" fill="#e8f0f4"/><path d="M18.600 11.200c-2.400 .9-4.200 3-5.600 5.600l-2.300 3.400 2.300 5.400 2.500-.9-1.100-3.600 3.400-3.400z" fill="#cfe7f2" stroke="#8cbdd0" stroke-width=".45"/><path d="M29.600 11.200c2.600 1.100 4 3.200 4.500 5.800l-.6 4.200-2.300 4-2.400-.9 1.400-3.800-1.200-3.600z" fill="#cfe7f2" stroke="#8cbdd0" stroke-width=".45"/><path d="M18.400 11.300c1.600-1.100 3.600-1.500 5.800-1.500s4.200 .4 5.600 1.500l.9 14h-12.600z" fill="#cfe7f2" stroke="#8cbdd0" stroke-width=".45"/><rect x="18.100" y="25.100" width="13" height="2.900" rx=".7" fill="#b0d9e9" stroke="#8cbdd0" stroke-width=".4"/><path d="M19.600 10.400c-.5-4.600 1.400-8.400 4.500-8.700 3.200 .3 5 4.100 4.400 8.700-2.700 1.200-6.200 1.200-8.900 0z" fill="#cfe7f2" stroke="#8cbdd0" stroke-width=".45"/><ellipse cx="24.100" cy="6.400" rx="2.900" ry="2.300" fill="#b0d9e9"/><path d="M22.900 9.200v4.600M25.300 9.200v4.200" stroke="#8cbdd0" stroke-width=".45" fill="none"/><circle cx="24.2" cy="16" r="2.5" fill="#f3c885" stroke="#d9a566" stroke-width=".35"/><path d="M22.20 16.75a2.12 2.12 0 0 0 4.00 0z" fill="#e89b6d"/></svg><span class="t" style="left:2925.31px;top:14.06px;line-height:112px;letter-spacing:1.7px;">Hoodies</span><span class="t" style="left:4403.53px;top:12.95px;line-height:112px;letter-spacing:6px;font-size:82.8px;">45</span><span class="t" style="left:5314.15px;top:14.06px;line-height:112px;letter-spacing:2.22px;">woo-...</span><span class="t" style="left:5650.15px;top:14.06px;line-height:112px;letter-spacing:1.59px;">Pellentesque habitant morbi tristiq...</span><span class="t" style="left:7070.74px;top:14.06px;line-height:112px;letter-spacing:1.45px;">hoodi...</span><span class="t" style="left:7411px;top:14.06px;line-height:112px;letter-spacing:2.82px;">publish</span><span class="t" style="left:7815.35px;top:14.06px;line-height:112px;letter-spacing:1.2px;">Taxable</span></div>
<div class="row o" style="left:62.4px;top:3585px;width:7958.8px;height:142.04px"><i class="ln"></i><i class="v" style="left:163.12px"></i><i class="v" style="left:504.02px"></i><i class="v" style="left:1924.42px"></i><i class="v" style="left:2378.94px"></i><i class="v" style="left:2890.29px"></i><i class="v" style="left:3742.53px"></i><i class="v" style="left:4367.5px"></i><i class="v" style="left:4822.03px"></i><i class="v" style="left:5276.56px"></i><i class="v" style="left:5617.46px"></i><i class="v" style="left:7037.86px"></i><i class="v" style="left:7378.75px"></i><i class="v" style="left:7776.46px"></i><span class="cb" style="left:33.4px;top:10px;width:103.8px;height:103.8px"></span><span class="t" style="left:197.88px;top:12.95px;line-height:112px;letter-spacing:-4.8px;font-size:82.8px;">13</span><span class="t" style="left:538.49px;top:14.06px;line-height:112px;letter-spacing:2.2px;">Hoodie</span><svg class="th" style="left:1960.8px;top:4.8px;width:180.8px;height:130px" viewBox="0 0 45 32.500" preserveAspectRatio="none"><rect width="45" height="32.500" fill="#e8f0f4"/><path d="M18.600 11.200c-2.400 .9-4.200 3-5.600 5.600l-2.300 3.400 2.300 5.400 2.500-.9-1.100-3.600 3.400-3.400z" fill="#f7a896" stroke="#d96f5b" stroke-width=".45"/><path d="M29.600 11.200c2.600 1.100 4 3.200 4.500 5.800l-.6 4.200-2.300 4-2.400-.9 1.400-3.800-1.200-3.600z" fill="#f7a896" stroke="#d96f5b" stroke-width=".45"/><path d="M18.400 11.300c1.600-1.100 3.600-1.500 5.800-1.500s4.200 .4 5.600 1.500l.9 14h-12.600z" fill="#f7a896" stroke="#d96f5b" stroke-width=".45"/><rect x="18.100" y="25.100" width="13" height="2.900" rx=".7" fill="#ee7f6a" stroke="#d96f5b" stroke-width=".4"/><path d="M19.600 10.400c-.5-4.600 1.400-8.400 4.500-8.700 3.200 .3 5 4.100 4.400 8.700-2.700 1.200-6.200 1.200-8.900 0z" fill="#f7a896" stroke="#d96f5b" stroke-width=".45"/><ellipse cx="24.100" cy="6.400" rx="2.900" ry="2.300" fill="#ee7f6a"/><path d="M22.900 9.200v4.600M25.300 9.200v4.200" stroke="#d96f5b" stroke-width=".45" fill="none"/></svg><span class="gal" style="left:2413.6px;width:478px"><svg class="th" style="left:0px;top:4.8px;width:180.8px;height:130px" viewBox="0 0 45 32.500" preserveAspectRatio="none"><rect width="45" height="32.500" fill="#e8f0f4"/><path d="M18.600 11.200c-2.400 .9-4.200 3-5.600 5.600l-2.300 3.400 2.300 5.400 2.500-.9-1.100-3.600 3.400-3.400z" fill="#cbe3ef" stroke="#92bfd2" stroke-width=".45"/><path d="M29.600 11.200c2.600 1.100 4 3.200 4.500 5.800l-.6 4.200-2.300 4-2.400-.9 1.400-3.800-1.200-3.600z" fill="#cbe3ef" stroke="#92bfd2" stroke-width=".45"/><path d="M18.400 11.300c1.600-1.100 3.600-1.500 5.800-1.500s4.200 .4 5.600 1.500l.9 14h-12.600z" fill="#cbe3ef" stroke="#92bfd2" stroke-width=".45"/><rect x="18.100" y="25.100" width="13" height="2.900" rx=".7" fill="#b4d8e7" stroke="#92bfd2" stroke-width=".4"/><path d="M19.600 10.400c-.5-4.600 1.400-8.400 4.500-8.700 3.200 .3 5 4.100 4.400 8.700-2.700 1.200-6.200 1.200-8.900 0z" fill="#cbe3ef" stroke="#92bfd2" stroke-width=".45"/><ellipse cx="24.100" cy="6.400" rx="2.900" ry="2.300" fill="#b4d8e7"/><path d="M22.900 9.200v4.600M25.300 9.200v4.200" stroke="#92bfd2" stroke-width=".45" fill="none"/></svg><svg class="th" style="left:180px;top:4.8px;width:180.8px;height:130px" viewBox="0 0 45 32.500" preserveAspectRatio="none"><rect width="45" height="32.500" fill="#e8f0f4"/><path d="M18.600 11.200c-2.400 .9-4.200 3-5.600 5.600l-2.300 3.400 2.300 5.400 2.500-.9-1.100-3.600 3.400-3.400z" fill="#a9dfcc" stroke="#62b59a" stroke-width=".45"/><path d="M29.600 11.200c2.600 1.100 4 3.200 4.500 5.800l-.6 4.200-2.300 4-2.400-.9 1.400-3.800-1.200-3.600z" fill="#a9dfcc" stroke="#62b59a" stroke-width=".45"/><path d="M18.400 11.300c1.600-1.100 3.600-1.500 5.800-1.500s4.200 .4 5.600 1.500l.9 14h-12.600z" fill="#a9dfcc" stroke="#62b59a" stroke-width=".45"/><rect x="18.100" y="25.100" width="13" height="2.900" rx=".7" fill="#6cc5a8" stroke="#62b59a" stroke-width=".4"/><path d="M19.600 10.400c-.5-4.600 1.400-8.400 4.500-8.700 3.200 .3 5 4.100 4.400 8.700-2.700 1.200-6.200 1.200-8.900 0z" fill="#a9dfcc" stroke="#62b59a" stroke-width=".45"/><ellipse cx="24.100" cy="6.400" rx="2.900" ry="2.300" fill="#6cc5a8"/><path d="M22.900 9.200v4.600M25.300 9.200v4.200" stroke="#62b59a" stroke-width=".45" fill="none"/></svg><svg class="th" style="left:360px;top:4.8px;width:180.8px;height:130px" viewBox="0 0 45 32.500" preserveAspectRatio="none"><rect width="45" height="32.500" fill="#e8f0f4"/><path d="M18.600 11.200c-2.400 .9-4.200 3-5.600 5.600l-2.300 3.400 2.300 5.400 2.500-.9-1.100-3.600 3.400-3.400z" fill="#cfe7f2" stroke="#8cbdd0" stroke-width=".45"/><path d="M29.600 11.200c2.600 1.100 4 3.200 4.500 5.800l-.6 4.200-2.300 4-2.400-.9 1.400-3.800-1.200-3.600z" fill="#cfe7f2" stroke="#8cbdd0" stroke-width=".45"/><path d="M18.400 11.300c1.600-1.100 3.600-1.500 5.800-1.500s4.200 .4 5.600 1.500l.9 14h-12.600z" fill="#cfe7f2" stroke="#8cbdd0" stroke-width=".45"/><rect x="18.100" y="25.100" width="13" height="2.900" rx=".7" fill="#b0d9e9" stroke="#8cbdd0" stroke-width=".4"/><path d="M19.600 10.400c-.5-4.600 1.400-8.400 4.500-8.700 3.200 .3 5 4.100 4.400 8.700-2.700 1.200-6.200 1.200-8.900 0z" fill="#cfe7f2" stroke="#8cbdd0" stroke-width=".45"/><ellipse cx="24.100" cy="6.400" rx="2.900" ry="2.300" fill="#b0d9e9"/><path d="M22.900 9.200v4.600M25.300 9.200v4.200" stroke="#8cbdd0" stroke-width=".45" fill="none"/><circle cx="24.2" cy="16" r="2.5" fill="#f3c885" stroke="#d9a566" stroke-width=".35"/><path d="M22.20 16.75a2.12 2.12 0 0 0 4.00 0z" fill="#e89b6d"/></svg></span><span class="t" style="left:2925.31px;top:14.06px;line-height:112px;letter-spacing:1.7px;">Hoodies</span><span class="t" style="left:5314.15px;top:14.06px;line-height:112px;letter-spacing:2.22px;">woo-...</span><span class="t" style="left:5650.15px;top:14.06px;line-height:112px;letter-spacing:1.59px;">Pellentesque habitant morbi tristiq...</span><span class="t" style="left:7071.02px;top:14.06px;line-height:112px;letter-spacing:2.19px;">hoodie</span><span class="t" style="left:7411px;top:14.06px;line-height:112px;letter-spacing:2.82px;">publish</span><span class="t" style="left:7815.35px;top:14.06px;line-height:112px;letter-spacing:1.2px;">Taxable</span></div>
<div class="row" style="left:62.4px;top:3727.04px;width:7958.8px;height:142.04px"><i class="ln"></i><i class="v" style="left:163.12px"></i><i class="v" style="left:504.02px"></i><i class="v" style="left:1924.42px"></i><i class="v" style="left:2378.94px"></i><i class="v" style="left:2890.29px"></i><i class="v" style="left:3742.53px"></i><i class="v" style="left:4367.5px"></i><i class="v" style="left:4822.03px"></i><i class="v" style="left:5276.56px"></i><i class="v" style="left:5617.46px"></i><i class="v" style="left:7037.86px"></i><i class="v" style="left:7378.75px"></i><i class="v" style="left:7776.46px"></i><span class="cb" style="left:33.4px;top:10px;width:103.8px;height:103.8px"></span><span class="t" style="left:199.42px;top:12.95px;line-height:112px;letter-spacing:4.67px;font-size:82.8px;">36</span><span class="t g" style="left:601.6px;top:14.06px;line-height:112px;letter-spacing:1.53px;">Hoodie [#13 var] (Yes)(Blue)</span><svg class="th" style="left:1960.8px;top:4.8px;width:180.8px;height:130px" viewBox="0 0 45 32.500" preserveAspectRatio="none"><rect width="45" height="32.500" fill="#e8f0f4"/><path d="M18.600 11.200c-2.400 .9-4.200 3-5.600 5.600l-2.300 3.400 2.300 5.400 2.500-.9-1.100-3.600 3.400-3.400z" fill="#cfe7f2" stroke="#8cbdd0" stroke-width=".45"/><path d="M29.600 11.200c2.600 1.100 4 3.200 4.500 5.800l-.6 4.200-2.300 4-2.400-.9 1.400-3.800-1.200-3.600z" fill="#cfe7f2" stroke="#8cbdd0" stroke-width=".45"/><path d="M18.400 11.300c1.600-1.100 3.600-1.500 5.800-1.500s4.200 .4 5.600 1.500l.9 14h-12.600z" fill="#cfe7f2" stroke="#8cbdd0" stroke-width=".45"/><rect x="18.100" y="25.100" width="13" height="2.900" rx=".7" fill="#b0d9e9" stroke="#8cbdd0" stroke-width=".4"/><path d="M19.600 10.400c-.5-4.600 1.400-8.400 4.500-8.700 3.200 .3 5 4.100 4.400 8.700-2.700 1.200-6.200 1.200-8.900 0z" fill="#cfe7f2" stroke="#8cbdd0" stroke-width=".45"/><ellipse cx="24.100" cy="6.400" rx="2.900" ry="2.300" fill="#b0d9e9"/><path d="M22.900 9.200v4.600M25.300 9.200v4.200" stroke="#8cbdd0" stroke-width=".45" fill="none"/><circle cx="24.2" cy="16" r="2.5" fill="#f3c885" stroke="#d9a566" stroke-width=".35"/><path d="M22.20 16.75a2.12 2.12 0 0 0 4.00 0z" fill="#e89b6d"/></svg><span class="t x" style="left:2426px;top:11.72px;line-height:112px;font-size:85.2px;">✖</span><span class="t x" style="left:2938px;top:11.72px;line-height:112px;font-size:85.2px;">✖</span><span class="t" style="left:4403.53px;top:12.95px;line-height:112px;letter-spacing:6px;font-size:82.8px;">45</span><span class="t" style="left:5314.15px;top:14.06px;line-height:112px;letter-spacing:2.22px;">woo-...</span><span class="t x" style="left:5664.4px;top:11.72px;line-height:112px;font-size:85.2px;">✖</span><span class="t" style="left:7411px;top:14.06px;line-height:112px;letter-spacing:2.82px;">publish</span><span class="t" style="left:7815.35px;top:14.06px;line-height:112px;letter-spacing:1.2px;">Taxable</span></div>
<div class="row o" style="left:62.4px;top:3869.08px;width:7958.8px;height:142.04px"><i class="ln"></i><i class="v" style="left:163.12px"></i><i class="v" style="left:504.02px"></i><i class="v" style="left:1924.42px"></i><i class="v" style="left:2378.94px"></i><i class="v" style="left:2890.29px"></i><i class="v" style="left:3742.53px"></i><i class="v" style="left:4367.5px"></i><i class="v" style="left:4822.03px"></i><i class="v" style="left:5276.56px"></i><i class="v" style="left:5617.46px"></i><i class="v" style="left:7037.86px"></i><i class="v" style="left:7378.75px"></i><i class="v" style="left:7776.46px"></i><span class="cb" style="left:33.4px;top:10px;width:103.8px;height:103.8px"></span><span class="t" style="left:198.59px;top:12.95px;line-height:112px;letter-spacing:6px;font-size:82.8px;">38</span><span class="t g" style="left:601.66px;top:14.06px;line-height:112px;letter-spacing:1.44px;">Hoodie [#13 var] (No)(Red)</span><svg class="th" style="left:1960.8px;top:4.8px;width:180.8px;height:130px" viewBox="0 0 45 32.500" preserveAspectRatio="none"><rect width="45" height="32.500" fill="#e8f0f4"/><path d="M18.600 11.200c-2.400 .9-4.200 3-5.600 5.600l-2.300 3.400 2.300 5.400 2.500-.9-1.100-3.600 3.400-3.400z" fill="#f7a896" stroke="#d96f5b" stroke-width=".45"/><path d="M29.600 11.200c2.600 1.100 4 3.200 4.500 5.800l-.6 4.200-2.300 4-2.400-.9 1.400-3.800-1.200-3.600z" fill="#f7a896" stroke="#d96f5b" stroke-width=".45"/><path d="M18.400 11.300c1.600-1.100 3.600-1.500 5.800-1.500s4.200 .4 5.600 1.500l.9 14h-12.600z" fill="#f7a896" stroke="#d96f5b" stroke-width=".45"/><rect x="18.100" y="25.100" width="13" height="2.900" rx=".7" fill="#ee7f6a" stroke="#d96f5b" stroke-width=".4"/><path d="M19.600 10.400c-.5-4.600 1.400-8.400 4.500-8.700 3.200 .3 5 4.100 4.400 8.700-2.700 1.200-6.200 1.200-8.900 0z" fill="#f7a896" stroke="#d96f5b" stroke-width=".45"/><ellipse cx="24.100" cy="6.400" rx="2.900" ry="2.300" fill="#ee7f6a"/><path d="M22.900 9.200v4.600M25.300 9.200v4.200" stroke="#d96f5b" stroke-width=".45" fill="none"/></svg><span class="t x" style="left:2426px;top:11.72px;line-height:112px;font-size:85.2px;">✖</span><span class="t x" style="left:2938px;top:11.72px;line-height:112px;font-size:85.2px;">✖</span><span class="t" style="left:4403.53px;top:12.95px;line-height:112px;letter-spacing:6px;font-size:82.8px;">45</span><span class="t" style="left:4859.16px;top:12.95px;line-height:112px;letter-spacing:3.84px;font-size:82.8px;">42</span><span class="t" style="left:5314.15px;top:14.06px;line-height:112px;letter-spacing:2.22px;">woo-...</span><span class="t x" style="left:5664.4px;top:11.72px;line-height:112px;font-size:85.2px;">✖</span><span class="t" style="left:7411px;top:14.06px;line-height:112px;letter-spacing:2.82px;">publish</span><span class="t" style="left:7815.35px;top:14.06px;line-height:112px;letter-spacing:1.2px;">Taxable</span></div>
<div class="hl" style="left:4437px;top:1596.44px;width:455.8px;height:142.04px"><i></i></div>
<div class="hl" style="left:4437px;top:2732.76px;width:455.8px;height:142.04px"><i></i></div>
<div class="hl" style="left:4437px;top:2874.8px;width:455.8px;height:142.04px"><i></i></div>
<div class="hl" style="left:4437px;top:3016.84px;width:455.8px;height:142.04px"><i></i></div>
<div class="hl" style="left:4437px;top:3158.88px;width:455.8px;height:142.04px"><i></i></div>
<div style="position:absolute;left:55.6px;top:1170px;width:6.8px;height:2760px;background:#ebebeb"></div>
<div id="track" style="left:8021.2px;top:1356px;width:90px;height:2572px"></div>
<div id="hdr" style="left:62.4px;top:1170px;width:8048.8px;height:193.2px"><i class="h" style="left:165px"></i><i class="h" style="left:505.9px"></i><i class="h" style="left:1926.3px"></i><i class="h" style="left:2380.82px"></i><i class="h" style="left:2892.17px"></i><i class="h" style="left:3744.41px"></i><i class="h" style="left:4369.38px"></i><i class="h" style="left:4823.91px"></i><i class="h" style="left:5278.44px"></i><i class="h" style="left:5619.34px"></i><i class="h" style="left:7039.74px"></i><i class="h" style="left:7380.63px"></i><i class="h" style="left:7778.34px"></i><span class="cb" style="left:33.4px;top:39.12px;width:103.8px;height:103.8px"></span><span class="t" style="left:258.73px;top:35.14px;line-height:112px;transform:scaleX(1.0969);letter-spacing:0.48px;">ID</span><span class="t" style="left:605.48px;top:35.14px;line-height:112px;transform:scaleX(1.0553);letter-spacing:0.48px;">Title</span><span class="t" style="left:2017.59px;top:35.14px;line-height:112px;transform:scaleX(1.0701);letter-spacing:0.48px;">Image</span><span class="t" style="left:2403.69px;top:35.14px;line-height:112px;transform:scaleX(1.0429);letter-spacing:0.48px;">Product ...</span><span class="t" style="left:2986.73px;top:35.14px;line-height:112px;transform:scaleX(1.0336);letter-spacing:0.48px;">Categories</span><span class="t" style="left:3842.99px;top:35.14px;line-height:112px;transform:scaleX(1.0178);letter-spacing:0.48px;">Tags</span><span class="t" style="left:4392.66px;top:35.14px;line-height:112px;transform:scaleX(1.0314);letter-spacing:0.48px;">Regular ...</span><span class="t" style="left:4851.1px;top:35.14px;line-height:112px;transform:scaleX(1.0105);letter-spacing:0.48px;">Sale Price</span><span class="t" style="left:5373.92px;top:35.14px;line-height:112px;transform:scaleX(1.0106);letter-spacing:0.48px;">SKU</span><span class="t" style="left:5711.69px;top:35.14px;line-height:112px;transform:scaleX(1.0400);letter-spacing:0.48px;">Description</span><span class="t" style="left:7135.1px;top:35.14px;line-height:112px;transform:scaleX(1.0214);letter-spacing:0.48px;">Slug</span><span class="t" style="left:7477.88px;top:35.14px;line-height:112px;transform:scaleX(1.0404);letter-spacing:0.48px;">Status</span><span class="t" style="left:7809.48px;top:35.14px;line-height:112px;transform:scaleX(1.0450);letter-spacing:0.48px;">Tax Status</span></div>
</div>
</div>
</body>
</html>
